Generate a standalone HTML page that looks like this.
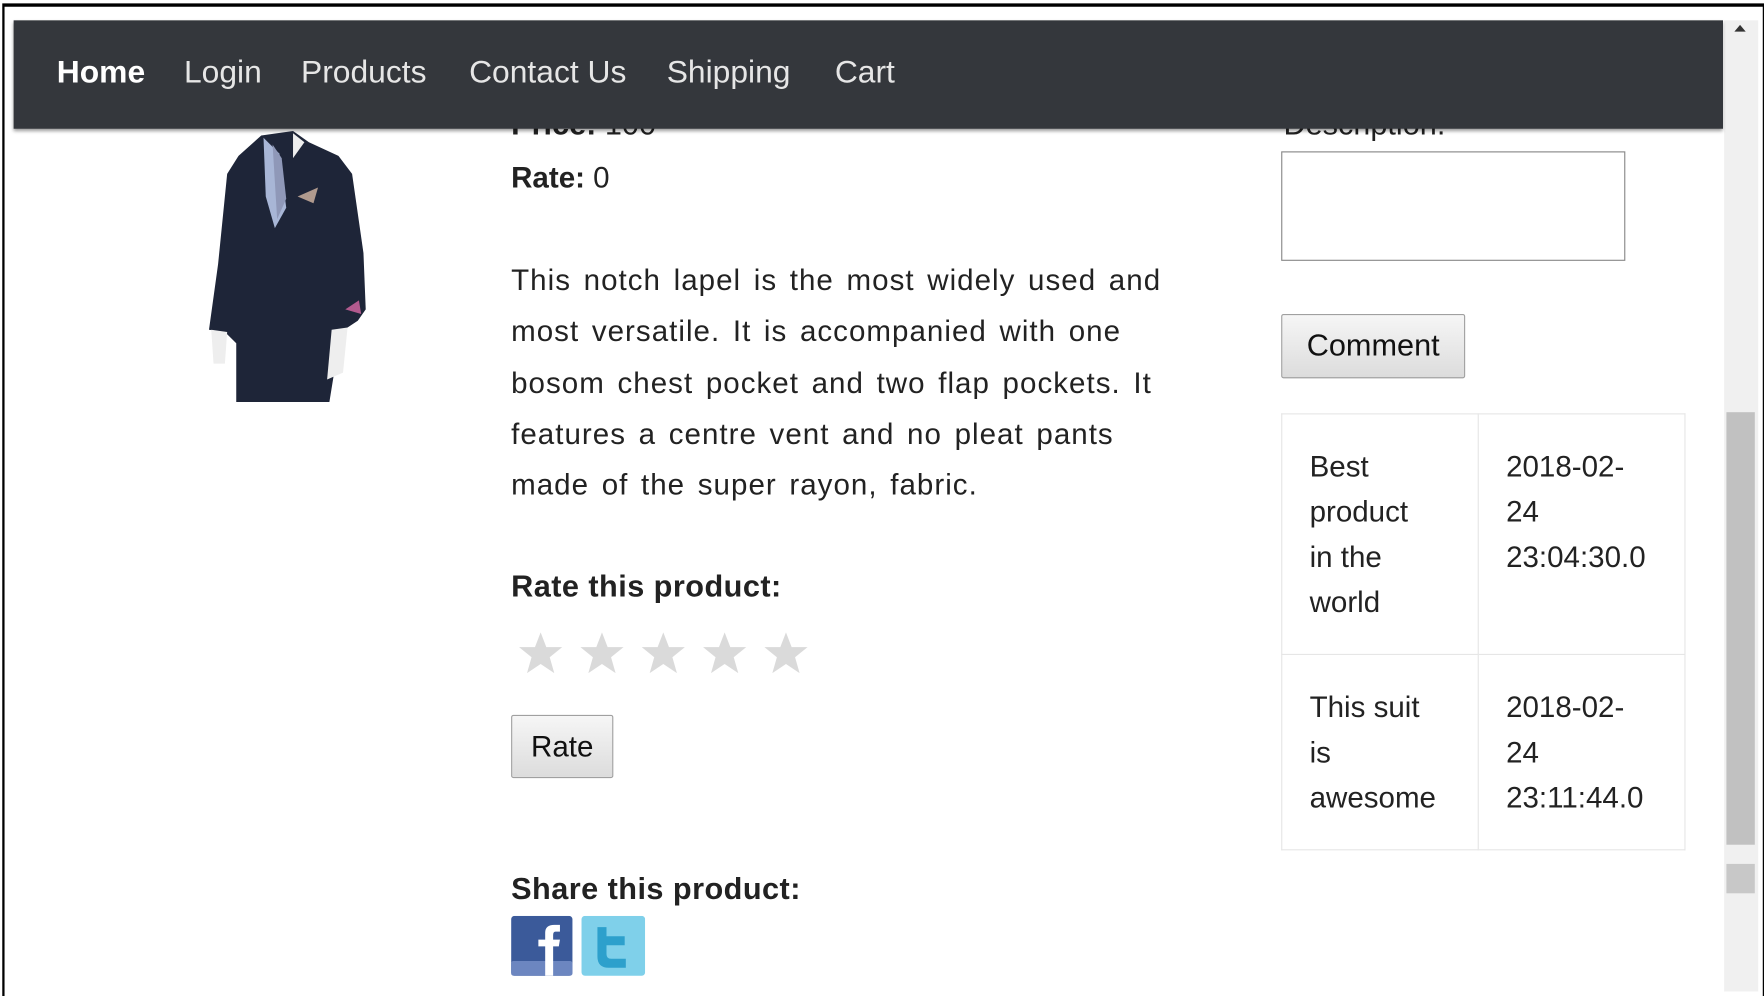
<!DOCTYPE html>
<html><head><meta charset="utf-8"><style>
html,body{margin:0;padding:0;background:#fff;overflow:hidden}
#wrap{width:1764px;height:996px;position:relative;overflow:hidden;background:#fff}
#c{position:absolute;left:0;top:0;width:1553px;height:882px;transform-origin:0 0;transform:scale(1.1358,1.1293);font-family:"Liberation Sans",sans-serif;color:#222}
.a{position:absolute;white-space:nowrap}
.nav{left:12px;top:18px;width:1505px;height:96px;background:#34373c;box-shadow:0 2px 3px rgba(0,0,0,.4)}
.nav span{position:absolute;font-size:28px;color:#e6e6e6;line-height:40px;top:26px}
.btn{position:absolute;border:1px solid #a0a0a0;background:linear-gradient(#f6f6f6,#dcdcdc);font-size:26px;color:#111;text-align:center;border-radius:2px}
.p{font-size:26px;line-height:45.3px;color:#222;letter-spacing:0.9px;word-spacing:3px}
td{border:1px solid #e6e6e6;vertical-align:top;padding:26px 24px;font-size:26px;line-height:40px;color:#222}
</style></head><body><div id="wrap"><div id="c">
<div class="a" style="left:2px;top:3px;width:1548px;height:876px;border:2px solid #000;border-top-width:3px"></div>
<div class="a" style="left:1518px;top:18px;width:30px;height:860px;background:#f0f0f0"></div>
<div class="a" style="left:1527px;top:22px;width:0;height:0;border-left:5px solid transparent;border-right:5px solid transparent;border-bottom:6px solid #333"></div>
<div class="a" style="left:1520px;top:365px;width:25px;height:383px;background:#c1c1c1"></div>
<div class="a" style="left:1520px;top:765px;width:25px;height:26px;background:#c8c8c8"></div>

<div class="a" style="left:450px;top:95px;font-size:27px;font-weight:bold">Price: <span style="font-weight:normal">100</span></div>
<div class="a" style="left:1130px;top:95px;font-size:27px">Description:</div>

<div class="a nav">
<span style="left:38px;font-weight:bold;color:#fff">Home</span>
<span style="left:150px">Login</span>
<span style="left:253px">Products</span>
<span style="left:401px">Contact Us</span>
<span style="left:575px">Shipping</span>
<span style="left:723px">Cart</span>
</div>

<svg class="a" style="left:180px;top:114px" width="155" height="242" viewBox="0 0 155 242">
<path d="M50 6 L78 2 L92 12 L118 24 L130 40 L140 110 L142 160 L135 170 L120 180 L110 242 L28 242 L28 190 L18 180 L4 178 L12 120 L20 40 L30 24 Z" fill="#1e2538"/>
<path d="M52 8 L66 22 L72 70 L62 88 L54 60 Z" fill="#a8b6d6"/>
<path d="M60 14 L68 26 L72 62 L64 80 Z" fill="#8f98b8"/>
<path d="M78 4 L88 12 L78 26 Z" fill="#eee"/>
<path d="M6 178 L20 180 L18 208 L8 208 Z" fill="#eee"/>
<path d="M112 178 L126 176 L122 216 L108 222 Z" fill="#eee"/>
<path d="M82 60 L100 52 L96 66 Z" fill="#b09a8e"/>
<path d="M124 160 L136 152 L138 164 Z" fill="#b25a8e"/>
</svg>

<div class="a" style="left:450px;top:142px;font-size:26px"><b>Rate:</b> 0</div>
<div class="a p" style="left:450px;top:226px">This notch lapel is the most widely used and<br>most versatile. It is accompanied with one<br>bosom chest pocket and two flap pockets. It<br>features a centre vent and no pleat pants<br>made of the super rayon, fabric.</div>
<div class="a" style="left:450px;top:504px;font-size:27px;font-weight:bold;letter-spacing:0.4px">Rate this product:</div>
<svg class="a" style="left:456px;top:559px" width="260" height="40" viewBox="0 0 260 40">
<defs><path id="s" d="M20 1 L25 14 L39 14 L28 23 L32 37 L20 29 L8 37 L12 23 L1 14 L15 14 Z" fill="#dadada"/></defs>
<use href="#s" x="0"/><use href="#s" x="54"/><use href="#s" x="108"/><use href="#s" x="162"/><use href="#s" x="216"/>
</svg>
<div class="btn" style="left:450px;top:633px;width:88px;height:54px;line-height:54px">Rate</div>
<div class="a" style="left:450px;top:772px;font-size:27px;font-weight:bold;letter-spacing:0.4px">Share this product:</div>
<svg class="a" style="left:450px;top:811px" width="118" height="54" viewBox="0 0 118 54">
<rect x="0" y="0" width="54" height="53" rx="3" fill="#3b5a9a"/>
<rect x="0" y="40" width="54" height="13" rx="2" fill="#6c86c0"/>
<path d="M30 53 V27 H24 V21 H30 V15 Q30 8 38 8 H43 V14 H39 Q37 14 37 17 V21 H43 L42 27 H37 V53 Z" fill="#fff"/>
<rect x="62" y="0" width="56" height="53" rx="3" fill="#7fd0ea"/>
<path d="M76 10 H84 V18 H100 V26 H84 V34 Q84 38 88 38 H101 V46 H86 Q76 46 76 36 Z" fill="#2da0cc"/>
</svg>

<div class="a" style="left:1128px;top:134px;width:301px;height:95px;border:1px solid #888"></div>
<div class="btn" style="left:1128px;top:278px;width:160px;height:55px;line-height:55px;font-size:27px">Comment</div>
<table class="a" style="left:1128px;top:366px;border-collapse:collapse;width:356px">
<tr style="height:206px"><td style="width:124px">Best<br>product<br>in the<br>world</td><td>2018-02-<br>24<br>23:04:30.0</td></tr>
<tr style="height:165px"><td>This suit<br>is<br>awesome</td><td>2018-02-<br>24<br>23:11:44.0</td></tr>
</table>
</div></div></body></html>
